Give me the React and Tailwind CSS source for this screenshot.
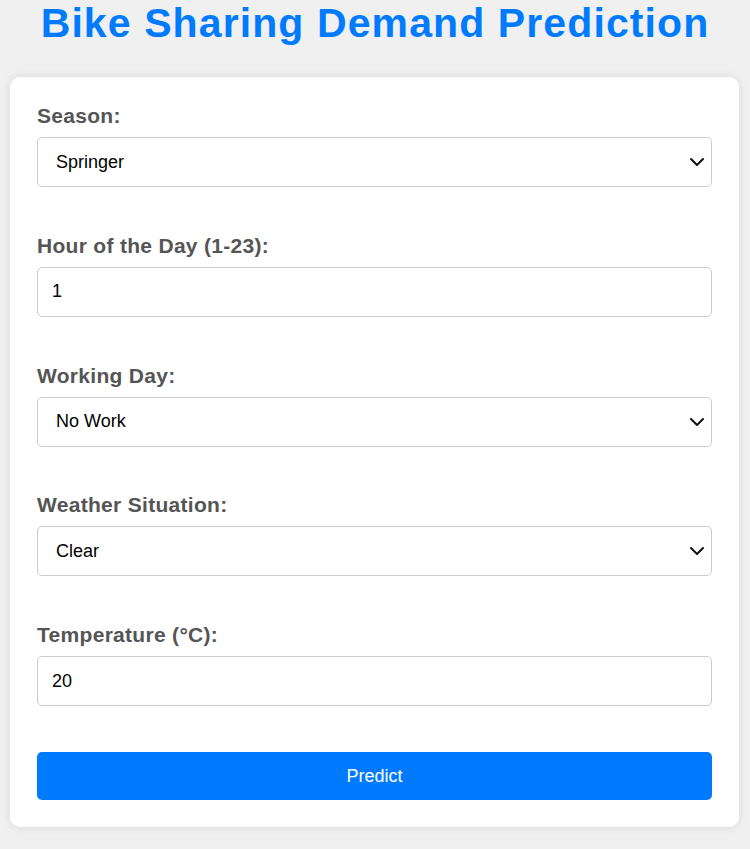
import React from "react";

const Chevron = () => (
  <svg className="pointer-events-none absolute right-[8px] top-1/2 -translate-y-1/2" width="14" height="9" viewBox="0 0 14 9" fill="none">
    <path d="M1 1.5 L7 7.5 L13 1.5" stroke="#111" strokeWidth="2" strokeLinecap="round" strokeLinejoin="round" />
  </svg>
);

function SelectField({ label, options, value }) {
  return (
    <div className="flex flex-col">
      <label className="text-[21px] tracking-[0.3px] font-bold leading-[23px] text-[#555] mb-[10px]">{label}</label>
      <div className="relative">
        <select
          defaultValue={value}
          className="appearance-none w-full h-[50px] border border-[#ccc] rounded-[5px] bg-white pl-[18px] pr-[30px] text-[18px] text-black outline-none"
        >
          {options.map((o) => (
            <option key={o}>{o}</option>
          ))}
        </select>
        <Chevron />
      </div>
    </div>
  );
}

function InputField({ label, value }) {
  return (
    <div className="flex flex-col">
      <label className="text-[21px] tracking-[0.3px] font-bold leading-[23px] text-[#555] mb-[10px]">{label}</label>
      <input
        type="number"
        defaultValue={value}
        className="w-full h-[50px] border border-[#ccc] rounded-[5px] bg-white px-[14px] text-[18px] text-black outline-none [appearance:textfield]"
      />
    </div>
  );
}

export default function App() {
  return (
    <div className="min-h-[849px] bg-[#f0f0f0] font-['Liberation_Sans',Arial,sans-serif] overflow-hidden">
      <h1 className="text-[41px] tracking-[1.1px] font-bold leading-[46px] text-[#007bff] text-center">
        Bike Sharing Demand Prediction
      </h1>
      <div className="ml-[10px] mt-[31px] w-[729px] bg-white rounded-[10px] shadow-[0_0_10px_rgba(0,0,0,0.1)] px-[27px] pt-[27px] pb-[27px] flex flex-col gap-[46.75px]">
        <SelectField label="Season:" options={["Springer", "Summer", "Fall", "Winter"]} value="Springer" />
        <InputField label="Hour of the Day (1-23):" value="1" />
        <SelectField label="Working Day:" options={["No Work", "Working Day"]} value="No Work" />
        <SelectField label="Weather Situation:" options={["Clear", "Mist", "Light Snow", "Heavy Rain"]} value="Clear" />
        <InputField label="Temperature (°C):" value="20" />
        <button className="-mt-[0.75px] h-[48px] w-full rounded-[5px] bg-[#007bff] text-white text-[18px]">
          Predict
        </button>
      </div>
    </div>
  );
}
